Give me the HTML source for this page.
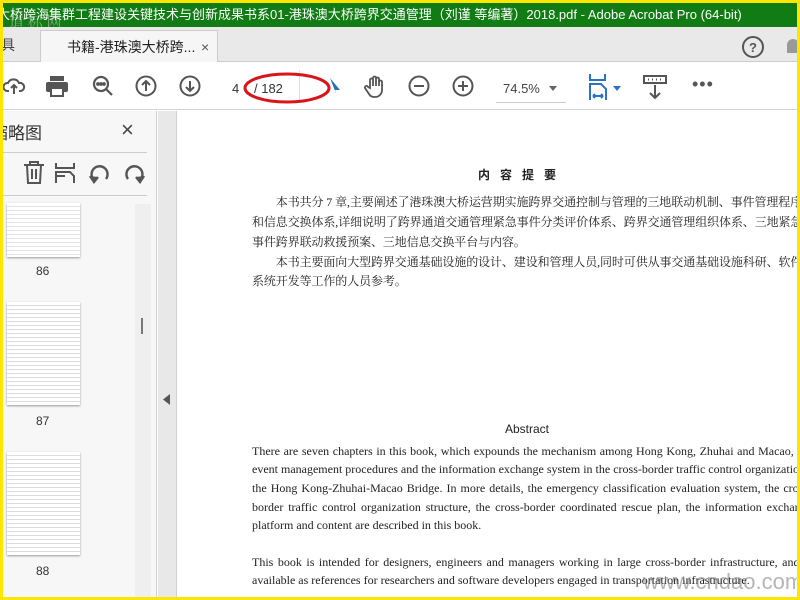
<!DOCTYPE html>
<html><head><meta charset="utf-8"><style>
*{margin:0;padding:0;box-sizing:border-box}
body{width:800px;height:600px;overflow:hidden;background:#ffe600;position:relative;font-family:"Liberation Sans","Noto Sans CJK SC",sans-serif}
#in{position:absolute;left:3px;top:3px;width:794px;height:594px;background:#fff;overflow:hidden}
.abs{position:absolute}
#title{left:0;top:0;width:794px;height:24px;background:#127c14;color:#fff;font-size:13px;line-height:24px;white-space:nowrap;overflow:hidden;text-indent:-6px}
#tabs{left:0;top:24px;width:794px;height:35px;background:#e9e9e9;border-bottom:1px solid #ccc}
#tab{left:37px;top:3px;width:178px;height:33px;background:#f6f6f6;border:1px solid #ccc;border-bottom:none;font-size:14px;line-height:32px;padding-left:26px;color:#222}
#tb{left:0;top:59px;width:794px;height:48px;background:#fff;border-bottom:1px solid #d4d4d4}
#side{left:0;top:108px;width:154px;height:486px;background:#f7f7f7;border-right:1px solid #cfcfcf}
#strip{left:155px;top:108px;width:19px;height:486px;background:#e8e8e8;border-right:1px solid #d0d0d0}
.zh{font-family:"Liberation Serif","Noto Serif CJK SC",serif;font-size:12px;color:#222;white-space:nowrap;left:249px;letter-spacing:-0.1px}
.en{font-family:"Liberation Serif",serif;font-size:12px;color:#222;white-space:nowrap;left:249px;width:560px;text-align:justify;text-align-last:justify}
.th{left:4px;width:73px;background:#fff;box-shadow:0 1px 2px #999}
.num{font-size:12px;color:#333;left:33px}
svg{position:absolute}
</style></head><body><div id="in">
<div id="title" class="abs">大桥跨海集群工程建设关键技术与创新成果书系01-港珠澳大桥跨界交通管理（刘谨 等编著）2018.pdf - Adobe Acrobat Pro (64-bit)</div>
<div class="abs" style="left:6px;top:8px;font-size:15px;color:rgba(200,200,200,.6);font-family:'Liberation Serif','Noto Serif CJK SC',serif">道 标 网</div>
<div id="tabs" class="abs"><div class="abs" style="left:-2px;top:8px;font-size:14px;color:#444">具</div><div id="tab" class="abs">书籍-港珠澳大桥跨...<span style="position:absolute;left:160px;font-size:14px;color:#555">×</span></div>
<svg style="left:738px;top:8px" width="24" height="24"><circle cx="12" cy="12" r="10" fill="none" stroke="#555" stroke-width="2"/><text x="12" y="17" text-anchor="middle" font-size="13" font-weight="bold" fill="#555" font-family="Liberation Sans">?</text></svg>
<svg style="left:780px;top:8px" width="14" height="24"><path d="M4 18 V10 a6 6 0 0 1 12 0 V18 H2" fill="#999"/></svg>
</div>
<div id="tb" class="abs">
<svg style="left:0;top:12px" width="24" height="24" fill="none" stroke="#555" stroke-width="2"><path d="M6 17 H4 a4 4 0 0 1 1-8 a6 6 0 0 1 11 0 a4 4 0 0 1 2 8 H16 M11 20 V11 M8 14 l3-3 3 3"/></svg>
<svg style="left:42px;top:13px" width="24" height="22"><rect x="5" y="1" width="14" height="5" fill="#555"/><rect x="1" y="7" width="22" height="10" rx="2" fill="#555"/><rect x="6" y="13" width="12" height="8" fill="#fff" stroke="#555" stroke-width="2"/></svg>
<svg style="left:88px;top:12px" width="24" height="24" fill="none" stroke="#555" stroke-width="2.2"><circle cx="10" cy="10" r="7"/><path d="M15 15 l6 6"/><circle cx="7" cy="10" r=".8" fill="#555"/><circle cx="10" cy="10" r=".8" fill="#555"/><circle cx="13" cy="10" r=".8" fill="#555"/></svg>
<svg style="left:132px;top:13px" width="24" height="24" fill="none" stroke="#555" stroke-width="2"><circle cx="11" cy="11" r="9.5"/><path d="M11 16 V6 M7 10 l4-4 4 4"/></svg>
<svg style="left:176px;top:13px" width="24" height="24" fill="none" stroke="#555" stroke-width="2"><circle cx="11" cy="11" r="9.5"/><path d="M11 6 V16 M7 12 l4 4 4-4"/></svg>
<div class="abs" style="left:229px;top:19px;font-size:13px;color:#333">4</div>
<div class="abs" style="left:251px;top:19px;font-size:13px;color:#333">/ 182</div>
<div class="abs" style="left:296px;top:8px;width:1px;height:32px;background:#ddd"></div>
<svg style="left:238px;top:5px" width="96" height="40"><ellipse cx="46" cy="21" rx="42" ry="14" fill="none" stroke="#d9141a" stroke-width="3"/></svg>
<svg style="left:325px;top:14px" width="14" height="22"><path d="M2 2 L12 14 L7 14 L9 20 Z" fill="#2b6fc0"/></svg>
<svg style="left:361px;top:12px" width="24" height="26" fill="none" stroke="#555" stroke-width="1.8"><path d="M6 14 V6 a1.5 1.5 0 0 1 3 0 V12 V4 a1.5 1.5 0 0 1 3 0 V12 V5 a1.5 1.5 0 0 1 3 0 V12 V8 a1.5 1.5 0 0 1 3 0 V16 a7 7 0 0 1-7 7 h-1 a6 6 0 0 1-5-3 l-4-6 a1.5 1.5 0 0 1 3-1z"/></svg>
<svg style="left:405px;top:13px" width="24" height="24" fill="none" stroke="#555" stroke-width="2"><circle cx="11" cy="11" r="9.5"/><path d="M6 11 H16"/></svg>
<svg style="left:449px;top:13px" width="24" height="24" fill="none" stroke="#555" stroke-width="2"><circle cx="11" cy="11" r="9.5"/><path d="M6 11 H16 M11 6 V16"/></svg>
<div class="abs" style="left:500px;top:19px;font-size:13px;color:#444">74.5%</div>
<div class="abs" style="left:493px;top:40px;width:70px;height:1px;background:#ccc"></div>
<svg style="left:546px;top:24px" width="10" height="6"><path d="M0 0 H8 L4 5Z" fill="#666"/></svg>
<svg style="left:586px;top:12px" width="36" height="28" fill="none" stroke="#2a74c8" stroke-width="2"><path d="M1 0 V6 H16 V0 M1 26 V10 H12 L17 15 V26 M4 22 H14 M4 22 l2-2 M4 22 l2 2 M14 22 l-2-2 M14 22 l-2 2"/><path d="M24 12 H32 L28 17Z" fill="#2a74c8" stroke="none"/></svg>
<svg style="left:640px;top:12px" width="26" height="26" fill="none" stroke="#555" stroke-width="2"><rect x="1" y="2" width="22" height="7"/><path d="M5 5.5h1M9 5.5h1M13 5.5h1M17 5.5h1M12 11 V24 M7 19 l5 5 5-5"/></svg>
<div class="abs" style="left:689px;top:12px;font-size:18px;color:#555;letter-spacing:1px">•••</div>
</div>
<div id="side" class="abs">
<div class="abs" style="left:-12px;top:8px;font-size:17px;color:#333">缩略图</div>
<div class="abs" style="left:118px;top:6px;font-size:22px;color:#444">×</div>
<div class="abs" style="left:0;top:41px;width:144px;height:1px;background:#ccc"></div>
<svg style="left:20px;top:50px" width="22" height="24" fill="none" stroke="#555" stroke-width="2"><path d="M1 4 H21 M7 4 V1 H15 V4 M4 4 L5 22 H17 L18 4 M9 8 V18 M13 8 V18"/></svg>
<svg style="left:52px;top:51px" width="22" height="22" fill="none" stroke="#555" stroke-width="2"><path d="M1 1 V6 H19 V1 M1 21 V10 H15 L19 14 V21 M1 14 H10"/></svg>
<svg style="left:86px;top:51px" width="22" height="22" fill="none" stroke="#555" stroke-width="2.4"><path d="M5 18 A8 8 0 1 1 17 17"/><path d="M1 14 L5 20 L9 15" fill="#555"/></svg>
<svg style="left:120px;top:51px" width="22" height="22" fill="none" stroke="#555" stroke-width="2.4"><path d="M17 18 A8 8 0 1 0 5 17"/><path d="M21 14 L17 20 L13 15" fill="#555"/></svg>
<div class="abs" style="left:0;top:84px;width:144px;height:1px;background:#ccc"></div>
<div class="abs" style="left:132px;top:93px;width:16px;height:393px;background:#efefef"></div>
<div class="abs" style="left:138px;top:207px;width:2px;height:16px;background:#777"></div>
<div class="abs th" style="top:92px;height:54px;background:repeating-linear-gradient(#fff 0 3px,#e2e2e2 3px 4px)"></div>
<div class="abs num" style="top:153px">86</div>
<div class="abs th" style="top:191px;height:103px;background:repeating-linear-gradient(#fff 0 3px,#ddd 3px 4px)"></div>
<div class="abs num" style="top:303px">87</div>
<div class="abs th" style="top:341px;height:103px;background:repeating-linear-gradient(#fff 0 3px,#ddd 3px 4px)"></div>
<div class="abs num" style="top:453px">88</div>
</div>
<div id="strip" class="abs"><svg style="left:5px;top:283px" width="8" height="12"><path d="M7 0 V11 L0 5.5Z" fill="#555"/></svg></div>
<div class="abs" style="left:475px;top:163px;font-size:12px;font-weight:bold;letter-spacing:10px;font-family:'Liberation Serif','Noto Sans CJK SC',serif;color:#222">内容提要</div>
<div class="abs zh" style="top:190px">　　本书共分 7 章,主要阐述了港珠澳大桥运营期实施跨界交通控制与管理的三地联动机制、事件管理程序</div>
<div class="abs zh" style="top:210px">和信息交换体系,详细说明了跨界通道交通管理紧急事件分类评价体系、跨界交通管理组织体系、三地紧急</div>
<div class="abs zh" style="top:230px">事件跨界联动救援预案、三地信息交换平台与内容。</div>
<div class="abs zh" style="top:250px">　　本书主要面向大型跨界交通基础设施的设计、建设和管理人员,同时可供从事交通基础设施科研、软件</div>
<div class="abs zh" style="top:269px">系统开发等工作的人员参考。</div>
<div class="abs" style="left:502px;top:419px;font-size:12px;color:#222">Abstract</div>
<div class="abs en" style="top:441px">There are seven chapters in this book, which expounds the mechanism among Hong Kong, Zhuhai and Macao, the</div>
<div class="abs en" style="top:459px">event management procedures and the information exchange system in the cross-border traffic control organization of</div>
<div class="abs en" style="top:478px">the Hong Kong-Zhuhai-Macao Bridge. In more details, the emergency classification evaluation system, the cross-</div>
<div class="abs en" style="top:497px">border traffic control organization structure, the cross-border coordinated rescue plan, the information exchange</div>
<div class="abs en" style="top:515px;text-align-last:left">platform and content are described in this book.</div>
<div class="abs en" style="top:552px">This book is intended for designers, engineers and managers working in large cross-border infrastructure, and is</div>
<div class="abs en" style="top:570px;text-align-last:left">available as references for researchers and software developers engaged in transportation infrastructure.</div>
<div class="abs" style="left:640px;top:566px;font-size:22px;color:rgba(120,120,120,.55);font-family:'Liberation Sans Narrow','Liberation Sans',sans-serif">www.cndao.com</div>
</div></body></html>
